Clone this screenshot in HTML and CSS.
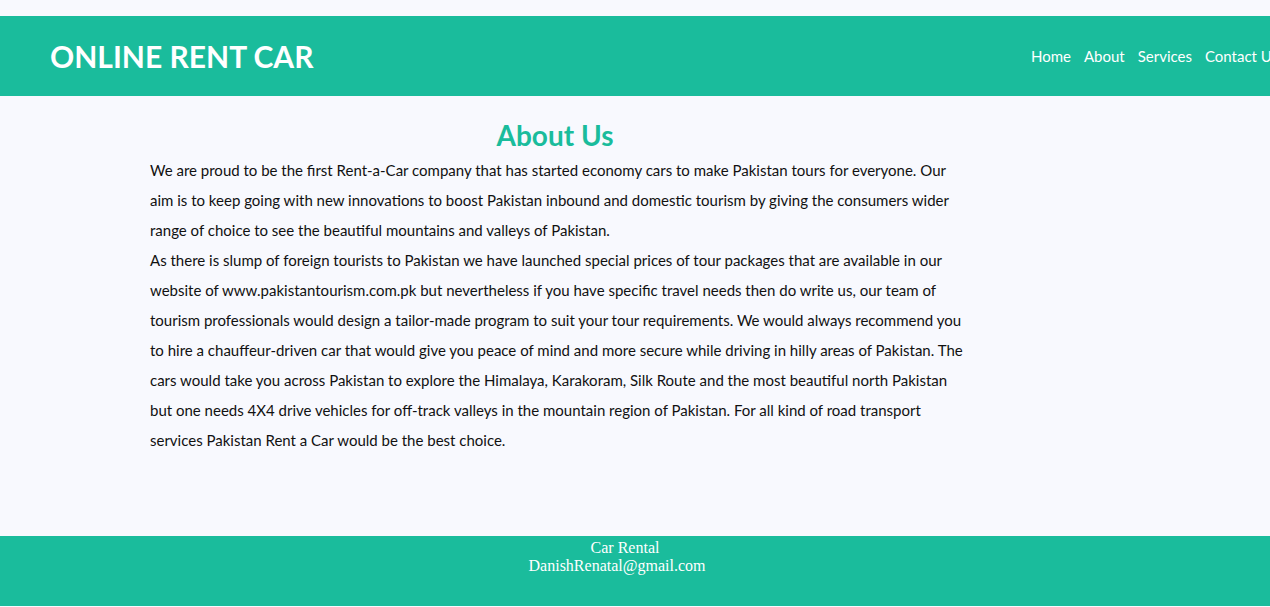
FILE: index.html
```html
<!DOCTYPE html>
<html lang="en">
<head>
<meta charset="utf-8">
<title>Online Rent Car - About</title>
<link rel="stylesheet" href="styles.css">
</head>
<body>
<header class="topbar">
  <h1 class="brand">ONLINE RENT CAR</h1>
  <nav class="nav">
    <a href="#">Home</a>
    <a href="#">About</a>
    <a href="#">Services</a>
    <a href="#">Contact Us</a>
  </nav>
</header>
<main class="about">
  <h2 class="about-title">About Us</h2>
  <p class="about-text">We are proud to be the first Rent-a-Car company that has started economy cars to make Pakistan tours for everyone. Our aim is to keep going with new innovations to boost Pakistan inbound and domestic tourism by giving the consumers wider range of choice to see the beautiful mountains and valleys of Pakistan.</p>
  <p class="about-text">As there is slump of foreign tourists to Pakistan we have launched special prices of tour packages that are available in our website of www.pakistantourism.com.pk but nevertheless if you have specific travel needs then do write us, our team of tourism professionals would design a tailor-made program to suit your tour requirements. We would always recommend you to hire a chauffeur-driven car that would give you peace of mind and more secure while driving in hilly areas of Pakistan. The cars would take you across Pakistan to explore the Himalaya, Karakoram, Silk Route and the most beautiful north Pakistan but one needs 4X4 drive vehicles for off-track valleys in the mountain region of Pakistan. For all kind of road transport services Pakistan Rent a Car would be the best choice.</p>
</main>
<footer class="footer">
  <div>Car Rental</div>
  <div class="footer-mail">DanishRenatal@gmail.com</div>
</footer>
</body>
</html>
```
FILE: styles.css
```css
html, body {
  margin: 0;
  padding: 0;
}
body {
  background: #f8f9fe;
  padding-top: 16px;
  height: 607px;
  box-sizing: border-box;
  display: flex;
  flex-direction: column;
  overflow: hidden;
}
.topbar {
  background: #1abc9c;
  height: 80px;
  display: flex;
  align-items: center;
  justify-content: space-between;
  padding-left: 50px;
  font-family: Lato, "Open Sans", sans-serif;
  flex-shrink: 0;
}
.brand {
  margin: 0;
  color: #fff;
  font-size: 30px;
  font-weight: 700;
}
.nav {
  display: flex;
  gap: 13px;
  margin-right: -8px;
  white-space: nowrap;
}
.nav a {
  color: #fff;
  text-decoration: none;
  font-size: 15px;
}
.about {
  flex: 1;
  width: 818px;
  margin-left: 150px;
  font-family: Lato, "Open Sans", sans-serif;
}
.about-title {
  margin: 22px 0 0;
  padding-right: 8px;
  text-align: center;
  color: #1abc9c;
  font-size: 28px;
  font-weight: 700;
  line-height: 34px;
}
.about-text {
  margin: 0;
  font-size: 15px;
  line-height: 30px;
  color: #111;
}
.about-title + .about-text {
  margin-top: 3px;
}
.footer {
  background: #1abc9c;
  height: 70px;
  margin-bottom: 1px;
  flex-shrink: 0;
  color: #fff;
  font-family: "Liberation Serif", serif;
  font-size: 16px;
  line-height: 18px;
  text-align: center;
  padding-top: 3px;
  box-sizing: border-box;
  padding-right: 20px;
}
.footer-mail {
  padding-right: 16px;
}
```
